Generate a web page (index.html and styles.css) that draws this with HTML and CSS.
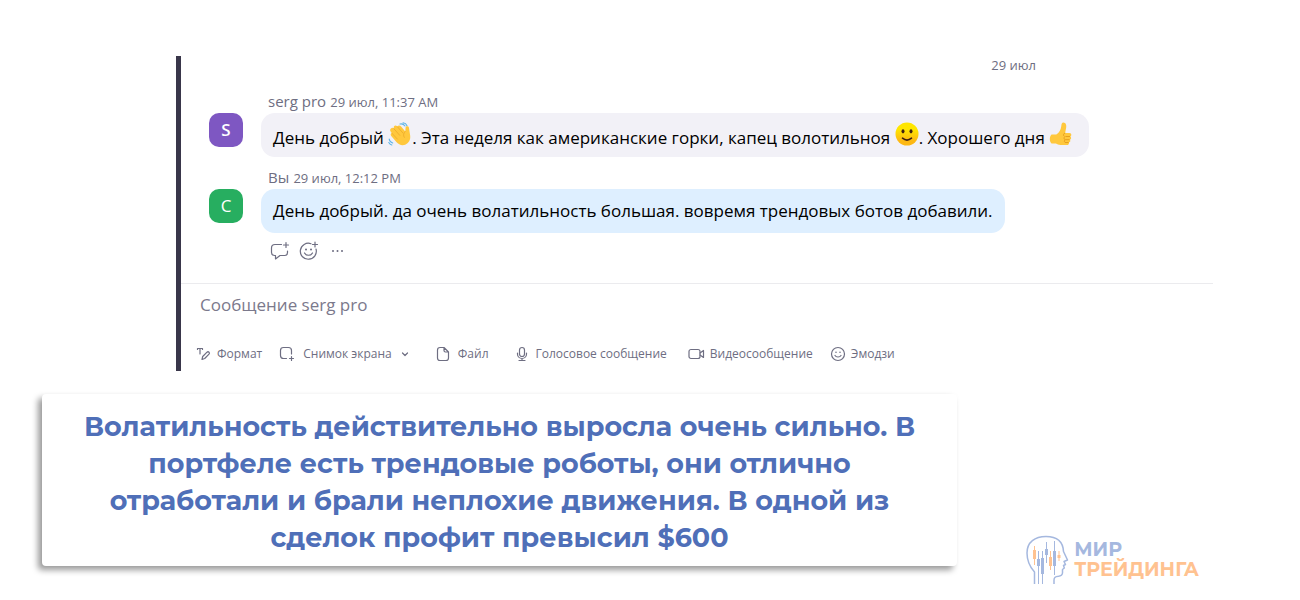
FILE: index.html
```html
<!DOCTYPE html>
<html lang="ru">
<head>
    <meta charset="UTF-8">
    <meta name="viewport" content="width=device-width, initial-scale=1.0">
    <title>Мир трейдинга</title>
    <link rel="stylesheet" href="styles.css">
</head>
<body>
    <main class="chat">
        <div class="messages">
            <div class="date">29 июл</div>
            <div class="message">
                <div class="avatar avatar-purple">S</div>
                <div class="message-body">
                    <div class="meta"><span class="name">serg pro</span> <span class="time">29 июл, 11:37 AM</span></div>
                    <div class="bubble bubble-emoji">День добрый
                        <svg class="emoji" viewBox="0 0 24 24" role="img" aria-label="wave">
                            <g fill="none" stroke="#5db4e8" stroke-width="1.1" stroke-linecap="round">
                                <path d="M12 2q3-.8 5 2M15 .8q3 .4 4 3M1.200 17q.3 3 3.500 4M.8 20.500q1 2 3 2.500"/>
                            </g>
                            <path fill="#ffc83d" d="M3 6.500c1-1.200 2-.7 2.700 0l.2-2c1-1.600 2.500-1 3.400.1l1-.9c1.200-.7 2 0 2.800.9l4.200 4.800.3-4c.2-1.600 3-1.700 3.300.1l1.300 8.200c.5 4-1.600 7.500-5 9-3.400 1.200-6.600-.2-8.800-2.700L3.200 14c-1-1.300-.4-2.500.6-2.900L2.600 9.500C1.800 8.300 2.100 7 3 6.500z"/>
                            <path fill="none" stroke="#e8a526" stroke-width=".7" stroke-linecap="round" d="M5.700 6.500l6 6.800M9.300 4.600l5.500 6.300M3.800 11.100l5.600 6M17.300 9.400c-2 1.800-2.300 4-1 6"/>
                        </svg>. Эта неделя как американские горки, капец волотильноя
                        <svg class="emoji" viewBox="0 0 24 24" role="img" aria-label="smile">
                            <defs>
                                <linearGradient id="smile" x1="0" y1="0" x2="0" y2="1">
                                    <stop offset=".3" stop-color="#ffe600"/>
                                    <stop offset=".8" stop-color="#fdb813"/>
                                </linearGradient>
                            </defs>
                            <circle cx="12" cy="12" r="11.500" fill="url(#smile)"/>
                            <ellipse cx="8" cy="9.300" rx="1.500" ry="2.100" fill="#402010"/>
                            <ellipse cx="16" cy="9.300" rx="1.500" ry="2.100" fill="#402010"/>
                            <path d="M7.500 16.200q4.500 3.800 9 0" fill="none" stroke="#402010" stroke-width="1.600" stroke-linecap="round"/>
                        </svg>. Хорошего дня
                        <svg class="emoji" viewBox="0 0 24 24" role="img" aria-label="thumbs up">
                            <path fill="#ffc83d" d="M2.500 12.500h4.800c3-2 4.500-4.500 5-8.500.2-2 .7-3.500 2-3.500 2.700 0 3.500 3 2.700 6l-.9 4.500h4.400c2.300.2 2.300 3 .8 3.500 1.300.8 1.100 2.800-.4 3.200.9 1 .4 2.500-1 2.700.4 1.300-.4 2.600-2 2.600h-6.500c-2 0-3-.8-4.500-1.500H2.500c-2.200-2-2.200-7 0-9z"/>
                            <path fill="none" stroke="#e39a1c" stroke-width=".9" d="M21 14.500h-4.500M20.600 17.700h-4.400M19.600 20.500h-3.500M16.200 11c-1.800.5-2.300 2.300-.8 3.400M15.900 14.600c-1.200 1-1.100 2.500.2 3.200-1 .8-1 2 0 2.700"/>
                        </svg>
                    </div>
                </div>
            </div>
            <div class="message">
                <div class="avatar avatar-green">С</div>
                <div class="message-body">
                    <div class="meta"><span class="name">Вы</span> <span class="time">29 июл, 12:12 PM</span></div>
                    <div class="bubble bubble-own">День добрый. да очень волатильность большая. вовремя трендовых ботов добавили.</div>
                    <div class="actions">
                        <button type="button" aria-label="Ответить">
                            <svg class="icon" width="20" height="20" viewBox="0 0 20 20">
                                <path d="M11.500 3.500H5Q1.500 3.500 1.500 7v4.500q0 3 3 3h1V18l4.500-3.500h5q2.500 0 2.500-3V10M16 1.500v5M13.500 4h5"/>
                            </svg>
                        </button>
                        <button type="button" aria-label="Реакция">
                            <svg class="icon" width="20" height="20" viewBox="0 0 20 20">
                                <path d="M12 2.700A8 8 0 1 0 17 8M16 1v5M13.500 3.500h5M5.500 12c1.500 3 6.500 3 8 0"/>
                                <path class="dot" d="M7 8.500h.01M12 8.500h.01"/>
                            </svg>
                        </button>
                        <button type="button" aria-label="Еще">
                            <svg class="icon" width="20" height="20" viewBox="0 0 20 20">
                                <path class="dot" d="M5 10h.01M9.500 10h.01M14 10h.01"/>
                            </svg>
                        </button>
                    </div>
                </div>
            </div>
        </div>
        <form class="composer">
            <input class="composer-input" type="text" placeholder="Сообщение serg pro" aria-label="Сообщение serg pro">
            <div class="toolbar">
                <button type="button">
                    <svg class="icon" width="16" height="16" viewBox="0 0 16 16">
                        <path d="M1.500 3.500v-1h5v1M4 2.500V8M6 13.500l.7-3 4.300-4.300q1-.9 2 0 .9 1 0 2L8.700 12.500z"/>
                    </svg>
                    Формат
                </button>
                <button type="button" class="screenshot">
                    <svg class="icon" width="16" height="16" viewBox="0 0 16 16">
                        <path d="M7.500 12.500H4.500Q1.500 12.500 1.500 9.500v-5Q1.500 1.500 4.500 1.500h5Q12.500 1.500 12.500 4.500V8M12.500 10.500v4M10.500 12.500h4"/>
                    </svg>
                    Снимок экрана
                    <svg class="icon chevron" width="8" height="8" viewBox="0 0 8 8">
                        <path d="M1.500 3L4 5.500 6.500 3"/>
                    </svg>
                </button>
                <button type="button" class="file">
                    <svg class="icon" width="14" height="16" viewBox="0 0 14 16">
                        <path d="M8 1.500H4Q1.500 1.500 1.500 4v8q0 2.500 2.500 2.500h6q2.500 0 2.500-2.500V6zV4.500Q8 6 9.500 6h3"/>
                    </svg>
                    Файл
                </button>
                <button type="button" class="voice">
                    <svg class="icon" width="12" height="16" viewBox="0 0 12 16">
                        <rect x="3.500" y="1.500" width="5" height="9" rx="2.500"/>
                        <path d="M1.500 7v1a4.500 4.500 0 0 0 9 0V7M6 12.500v2M3 14.500h6"/>
                    </svg>
                    Голосовое сообщение
                </button>
                <button type="button" class="video">
                    <svg class="icon" width="17" height="16" viewBox="0 0 17 16">
                        <rect x="1" y="3.500" width="11" height="9" rx="2"/>
                        <path d="M12 7l3.500-2.500v7L12 9"/>
                    </svg>
                    Видеосообщение
                </button>
                <button type="button" class="emoji-button">
                    <svg class="icon" width="16" height="16" viewBox="0 0 16 16">
                        <circle cx="8" cy="8" r="6.500"/>
                        <path d="M5 9.500c1.200 2 4.800 2 6 0"/>
                        <path class="dot-small" d="M6 6.200h.01M10 6.200h.01"/>
                    </svg>
                    Эмодзи
                </button>
            </div>
        </form>
    </main>
    <footer class="bottom">
        <div class="caption">Волатильность действительно выросла очень сильно. В портфеле есть трендовые роботы, они отлично отработали и брали неплохие движения. В одной из сделок профит превысил $600</div>
        <div class="logo">
            <svg class="logo-mark" width="44" height="50" viewBox="0 0 44 50">
                <path d="M8.500 49V37C3 31 1 25 1 18 1 7 9 1.500 20 1.500c11 0 17 5 17.500 15l4 8.500-3.500 1.500 1.500 3-2 1 .8 2.500-1.800 1.500V38q-.3 3-4 3.300c-4 .2-4.500 1.700-4.500 4V49" fill="none" stroke="#a5b8df" stroke-width="1.500" stroke-linejoin="round"/>
                <path d="M12.500 16v33M16.500 16v33M20.500 7v21M28.500 6v34" stroke="#a5b8df" stroke-width="1"/>
                <path d="M11 24h3v7h-3zM15 23h3v16h-3zM19 14h3v6h-3zM27 16h3v15h-3z" fill="#a5b8df"/>
                <path d="M8.500 11v19M24.500 16v19M33 16v10" stroke="#ffc290" stroke-width="1"/>
                <path d="M7 15h3v9H7zM23 22h3v9h-3zM31.500 20h3v3h-3z" fill="#ffc290"/>
            </svg>
            <div class="logo-text">
                <div class="logo-top">МИР</div>
                <div class="logo-name">ТРЕЙДИНГА</div>
            </div>
        </div>
    </footer>
</body>
</html>
```
FILE: styles.css
```css
body {
    margin: 0;
    padding: 56px 87px 10px 42px;
    background: #fff;
    font-family: "Open Sans", "Noto Sans", sans-serif;
    color: #6e6e82;
}
button {
    display: flex;
    align-items: center;
    border: none;
    padding: 0;
    background: none;
    font-family: inherit;
    font-size: 12px;
    line-height: 16px;
    color: inherit;
    white-space: nowrap;
    cursor: pointer;
}
.chat {
    margin-left: 134px;
    border-left: 5px solid #39364a;
}
.messages {
    padding: 0 0 22px 28px;
    border-bottom: 1px solid #ebebee;
}
.date {
    padding-right: 177px;
    font-size: 13px;
    line-height: 18px;
    text-align: right;
}
.message {
    display: flex;
    gap: 18px;
    margin-top: 10px;
}
.date + .message {
    margin-top: 17px;
}
.avatar {
    width: 34px;
    height: 34px;
    margin-top: 22px;
    border-radius: 10px;
    font-size: 17px;
    line-height: 34px;
    text-align: center;
    color: #fff;
}
.avatar-purple {
    background: #7e57c2;
    font-weight: 600;
}
.avatar-green {
    background: #27ae60;
}
.meta {
    padding-left: 7px;
    line-height: 21px;
}
.name {
    font-size: 15px;
}
.time {
    font-size: 13px;
}
.bubble {
    box-sizing: border-box;
    width: fit-content;
    padding: 0 12px;
    border-radius: 14px;
    font-size: 17px;
    line-height: 44px;
    color: #000;
}
.bubble-emoji {
    height: 44px;
    padding-top: 3px;
    padding-right: 16px;
    background: #f2f1f7;
}
.bubble-own {
    background: #deefff;
}
.emoji {
    width: 24px;
    height: 24px;
    vertical-align: -2px;
}
.icon {
    fill: none;
    stroke: currentColor;
    stroke-width: 1.2px;
    stroke-linecap: round;
    stroke-linejoin: round;
}
.dot {
    stroke-width: 2px;
}
.dot-small {
    stroke-width: 1.6px;
}
.actions {
    display: flex;
    gap: 9px;
    margin-top: 8px;
    padding-left: 9px;
}
.composer-input {
    display: block;
    box-sizing: border-box;
    width: 100%;
    height: 40px;
    border: none;
    padding: 0 19px;
    outline: none;
    background: none;
    font-family: inherit;
    font-size: 17px;
    color: inherit;
}
.composer-input::placeholder {
    color: #7b798c;
    opacity: 1;
}
.toolbar {
    display: flex;
    gap: 17px;
    padding: 22px 0 9px 15px;
}
.toolbar button {
    gap: 5px;
}
.toolbar .screenshot,
.toolbar .file,
.toolbar .voice {
    gap: 8px;
}
.toolbar .chevron {
    margin-left: 1px;
}
.toolbar .file {
    margin-left: 10px;
}
.toolbar .voice {
    margin-left: 10px;
}
.toolbar .video {
    margin-left: 4px;
}
.bottom {
    display: flex;
    justify-content: space-between;
    align-items: flex-start;
    margin-top: 23px;
}
.caption {
    box-sizing: border-box;
    width: 915px;
    padding: 14px 40px 10px;
    border-radius: 4px;
    box-shadow: -4px 4px 6px rgba(0, 0, 0, 0.4);
    font-family: Montserrat, Inter, sans-serif;
    font-size: 27px;
    font-weight: 700;
    line-height: 37px;
    text-align: center;
    color: #4f6fb8;
}
.logo {
    display: flex;
    align-items: center;
    gap: 4px;
    margin-top: 141px;
    padding-right: 14px;
    font-family: Montserrat, Inter, sans-serif;
    font-size: 19px;
    font-weight: 700;
    line-height: 20px;
}
.logo-top {
    color: #a5b8df;
}
.logo-name {
    color: #ffc290;
}
```
